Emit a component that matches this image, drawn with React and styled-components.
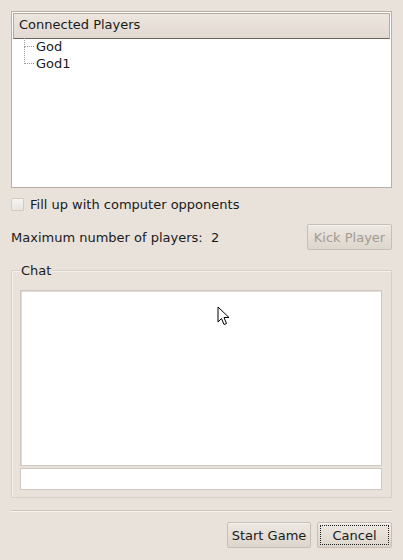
import styled, { createGlobalStyle } from "styled-components";

const Global = createGlobalStyle`
  html, body { margin: 0; padding: 0; background: #e8e2da; }
  body { font-family: "DejaVu Sans", "Liberation Sans", sans-serif; font-size: 13px; color: #1a1a1a; }
`;

const Dialog = styled.div`
  position: relative;
  width: 403px;
  height: 560px;
  box-sizing: border-box;
  padding: 11px 11px 0 11px;
  display: flex;
  flex-direction: column;
  background: #e8e2da;
`;

const TreeFrame = styled.div`
  height: 177px;
  box-sizing: border-box;
  border: 1px solid #b8b0a6;
  background: #fff;
  display: flex;
  flex-direction: column;
  padding-top: 1px;
`;

const TreeHeader = styled.div`
  height: 26px;
  margin: 0 1px;
  box-sizing: border-box;
  padding: 0 0 3px 5px;
  display: flex;
  align-items: center;
  background: linear-gradient(#ece6df, #e2dad1);
  border: 1px solid #b5aca1;
  border-bottom-color: #6b645c;
`;

const TreeList = styled.div`
  margin-top: -1px;
`;

const TreeItem = styled.div`
  height: 17px;
  line-height: 17px;
  display: flex;
  padding-left: 12px;
`;

const Branch = styled.span`
  align-self: flex-start;
  flex: none;
  width: 10px;
  height: ${p => (p.$first ? 9 : 17)}px;
  margin-top: ${p => (p.$first ? 0 : -8)}px;
  margin-right: 2px;
  border-left: 1px dotted #9a9a9a;
  border-bottom: 1px dotted #9a9a9a;
  box-sizing: border-box;
`;

const Row = styled.div`
  display: flex;
  align-items: center;
  margin-top: ${p => p.$top}px;
  height: ${p => p.$h}px;
`;

const CheckBox = styled.span`
  width: 11px;
  height: 11px;
  border: 1px solid #d2cbc2;
  background: linear-gradient(#f6f4f1, #e9e5e0);
  margin-right: 6px;
  border-radius: 1px;
`;

const Spacer = styled.div`
  flex: 1;
`;

const Button = styled.button`
  font-family: inherit;
  font-size: 13px;
  white-space: nowrap;
  height: 26px;
  padding: 0;
  width: ${p => p.$w}px;
  border: 1px solid #c7bfb5;
  border-radius: 2px;
  background: linear-gradient(#ede8e2, #ddd6cd);
  color: ${p => (p.disabled ? "#a39b92" : "#1a1a1a")};
  box-shadow: inset 0 1px 0 #f6f3ef;
  position: relative;
`;

const Focus = styled.span`
  position: absolute;
  inset: 2px;
  border: 1px dotted #222;
`;

const Group = styled.div`
  margin-top: 20px;
  height: 228px;
  box-sizing: border-box;
  border: 1px solid #d6cfc6;
  box-shadow: inset 1px 1px 0 #f4f1ec;
  padding: 0 9px 7px 9px;
  display: flex;
  flex-direction: column;
`;

const GroupTitle = styled.div`
  align-self: flex-start;
  margin: -9px 0 11px -1px;
  padding: 0 1px;
  line-height: 17px;
  background: #e8e2da;
`;

const ChatLog = styled.div`
  flex: 1;
  margin: 0 0 2px -1px;
  background: #fff;
  border: 1px solid #cfc8c0;
  box-shadow: inset 1px 1px 0 #e2ddd7;
`;

const ChatInput = styled.input`
  height: 22px;
  margin-left: -1px;
  box-sizing: border-box;
  border: 1px solid #cfc8c0;
  background: #fff;
  outline: none;
`;

const Separator = styled.hr`
  margin: 12px 0 0 0;
  border: 0;
  border-top: 1px solid #cdc5bb;
  border-bottom: 1px solid #f6f3ef;
`;

const ButtonRow = styled.div`
  display: flex;
  justify-content: flex-end;
  gap: 6px;
  margin-top: 10px;
`;

const Cursor = styled.svg`
  position: absolute;
  left: 217px;
  top: 306px;
`;

export default function App() {
  return (
    <>
      <Global />
      <Dialog>
        <TreeFrame>
          <TreeHeader>Connected Players</TreeHeader>
          <TreeList>
            <TreeItem>
              <Branch $first />God
            </TreeItem>
            <TreeItem>
              <Branch />God1
            </TreeItem>
          </TreeList>
        </TreeFrame>
        <Row $top={9} $h={14}>
          <CheckBox />
          Fill up with computer opponents
        </Row>
        <Row $top={13} $h={26}>
          Maximum number of players:&nbsp; 2
          <Spacer />
          <Button disabled $w={85}>Kick Player</Button>
        </Row>
        <Group>
          <GroupTitle>Chat</GroupTitle>
          <ChatLog />
          <ChatInput />
        </Group>
        <Separator />
        <ButtonRow>
          <Button $w={84}>Start Game</Button>
          <Button $w={75}>
            <Focus />
            Cancel
          </Button>
        </ButtonRow>
        <Cursor width="14" height="22" viewBox="0 0 14 22">
          <path
            d="M1 1 L1 16 L4.5 12.5 L7 18.5 L9.5 17.5 L7 11.5 L12 11.5 Z"
            fill="#fff"
            stroke="#000"
            strokeWidth="1"
          />
        </Cursor>
      </Dialog>
    </>
  );
}
